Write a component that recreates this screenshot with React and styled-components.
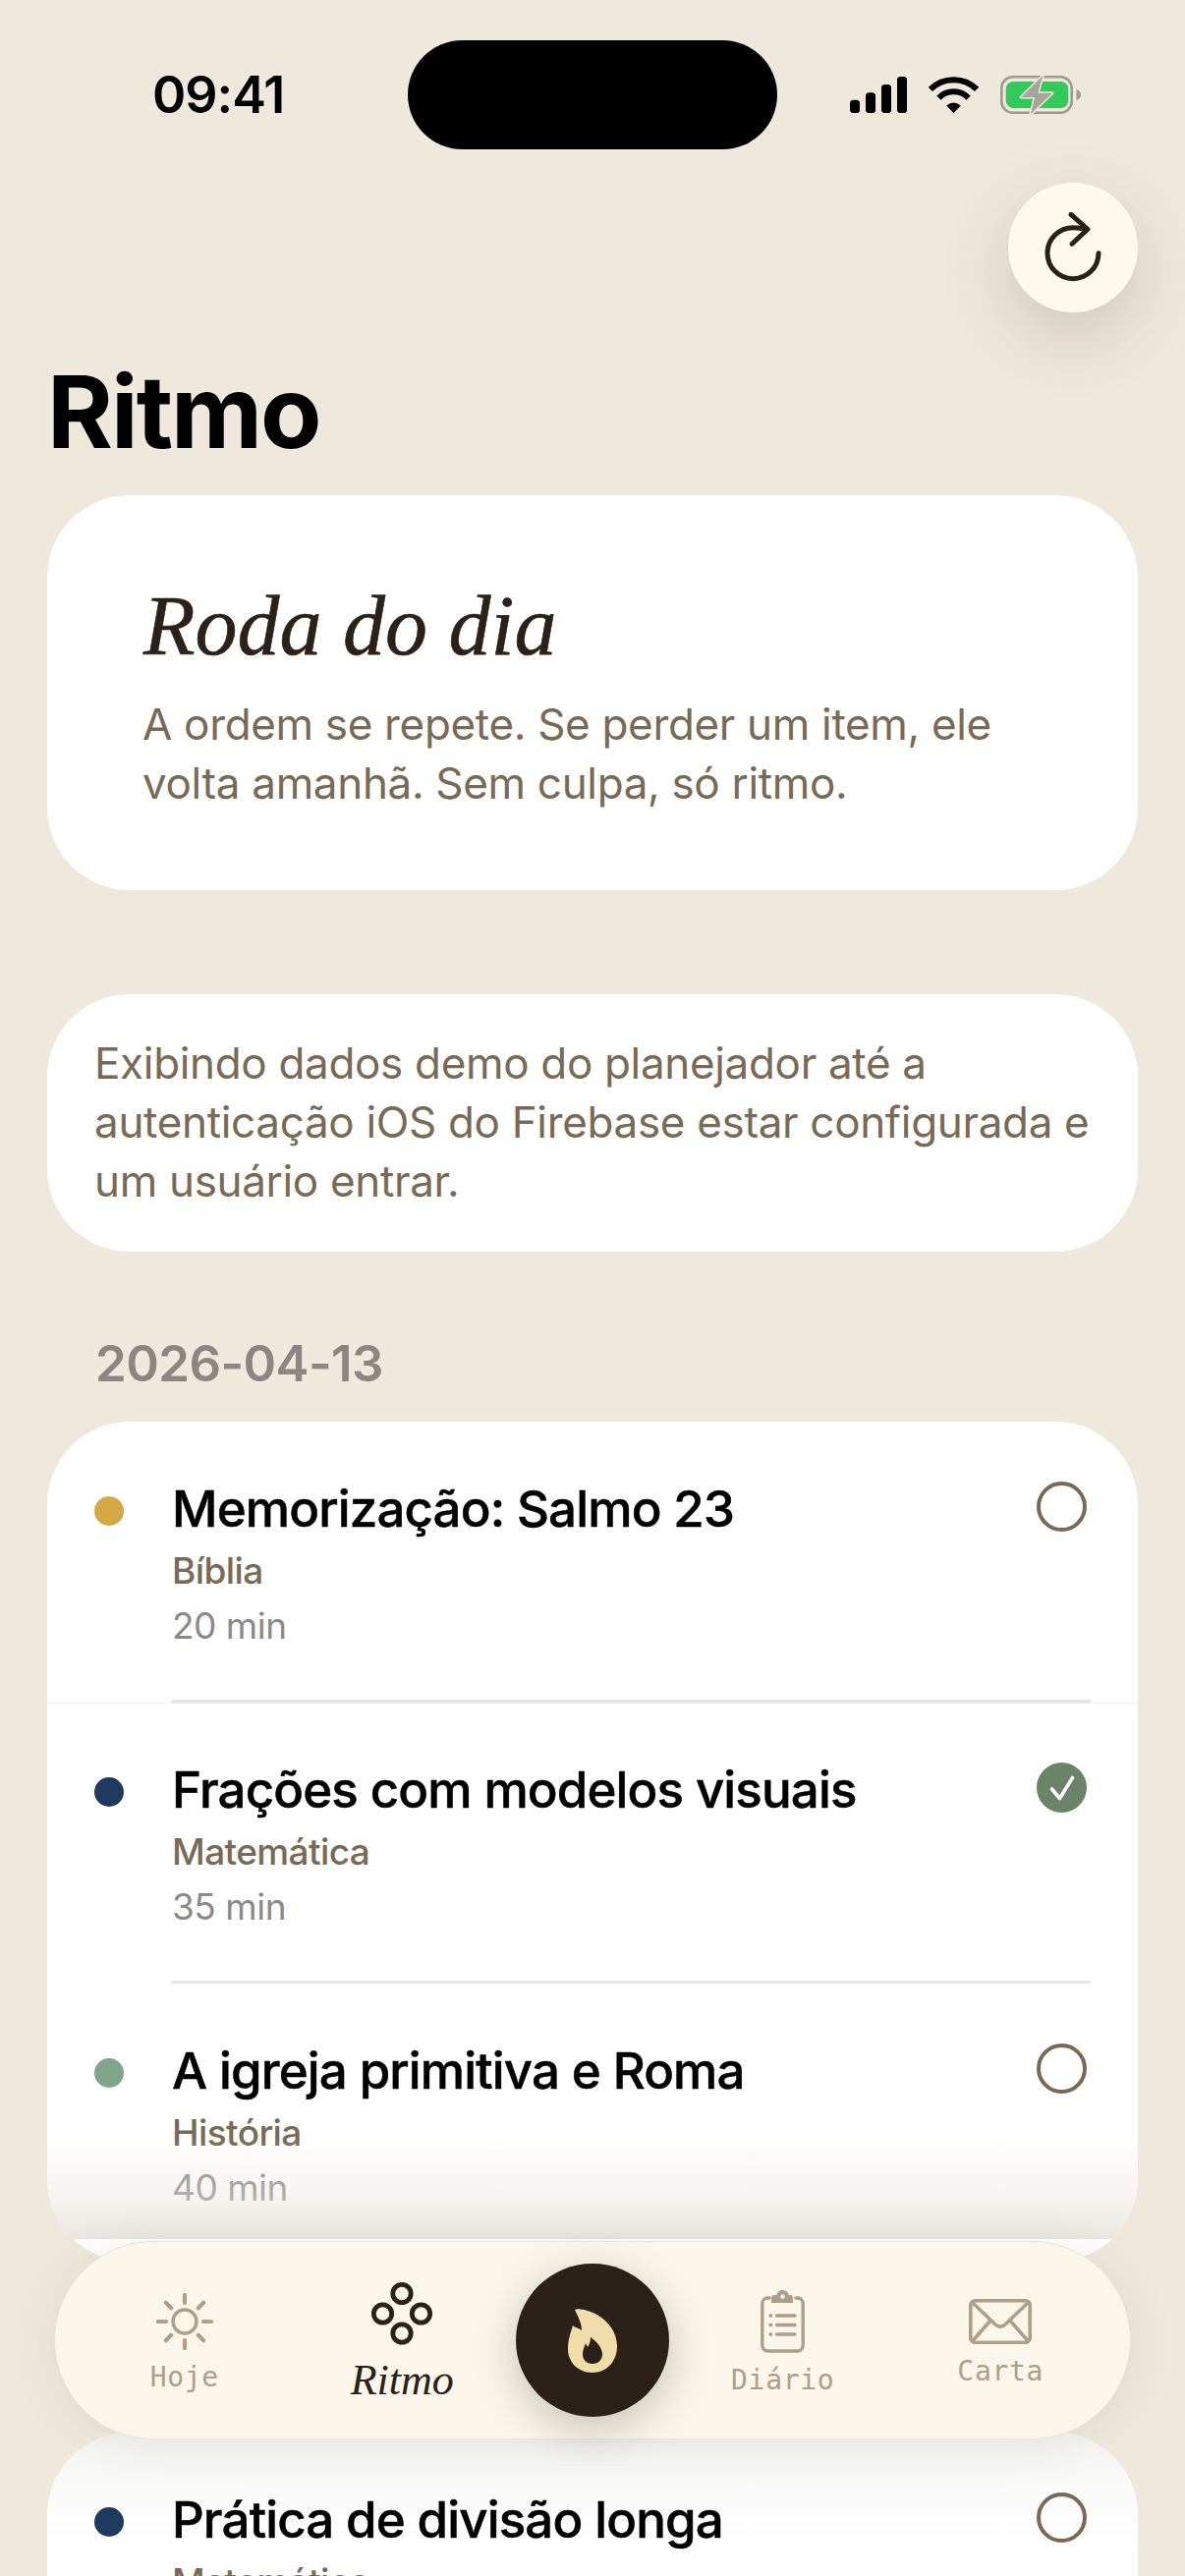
import React from 'react';
import styled, { createGlobalStyle } from 'styled-components';

const GlobalStyle = createGlobalStyle`
    html, body {
        margin: 0;
        padding: 0;
        background: #efe9dd;
    }
    * {
        box-sizing: border-box;
    }
`;

const SANS = `Inter, "Liberation Sans", sans-serif`;
const SERIF = `"Liberation Serif", serif`;
const MONO = `"DejaVu Sans Mono", monospace`;

const Page = styled.div`
    position: relative;
    width: 1206px;
    height: 2622px;
    overflow: hidden;
    background: #efe9dd;
    font-family: ${SANS};
`;

const StatusBar = styled.div`
    display: grid;
    grid-template-columns: 415px 376px 1fr;
    align-items: center;
    padding-top: 41px;
`;

const Time = styled.div`
    padding-left: 155px;
    font-size: 52px;
    line-height: 60px;
    font-weight: 600;
    letter-spacing: -1px;
    color: #000;
`;

const Island = styled.div`
    height: 111px;
    border-radius: 56px;
    background: #000;
`;

const StatusIcons = styled.div`
    display: flex;
    align-items: center;
    padding-left: 74px;
    gap: 22px;
`;

const RefreshRow = styled.div`
    display: flex;
    justify-content: flex-end;
    padding: 34px 48px 0;
`;

const RefreshButton = styled.button`
    display: flex;
    align-items: center;
    justify-content: center;
    width: 132px;
    height: 132px;
    padding: 0;
    border: none;
    border-radius: 50%;
    background: #fff9ec;
    box-shadow: 0 24px 70px rgba(70, 60, 35, 0.2);
`;

const Content = styled.div`
    padding: 0 48px;
`;

const Title = styled.h1`
    margin: 41px 0 25px;
    font-size: 102px;
    line-height: 120px;
    font-weight: 700;
    letter-spacing: -2px;
    color: #000;
`;

const Card = styled.div`
    position: relative;
    overflow: hidden;
    border-radius: 84px;
    background: ${props => props.$shaded ? 'linear-gradient(#f4f4f3, #ffffff 110px)' : '#ffffff'};
`;

const HeroCard = styled(Card)`
    padding: 83px 97px 79px;
    margin-bottom: 106px;
`;

const HeroTitle = styled.h2`
    margin: 0 0 20px 1px;
    font-family: ${SERIF};
    font-style: italic;
    font-weight: 400;
    font-size: 86px;
    line-height: 100px;
    -webkit-text-stroke: 0.6px #2c2118;
    color: #2c2118;
`;

const BodyText = styled.p`
    margin: 0;
    font-size: 44px;
    line-height: 60px;
    letter-spacing: -0.33px;
    color: #7a6a55;
`;

const NoticeCard = styled(Card)`
    padding: 40px 44px 42px 48px;
`;

const DateLabel = styled.div`
    margin: 84px 0 29px;
    padding-left: 49px;
    font-size: 51px;
    line-height: 60px;
    font-weight: 600;
    letter-spacing: -0.6px;
    color: #8b8681;
`;

const ListCard = styled(Card)`
    margin-bottom: 174px;
`;

const Row = styled.div`
    display: flex;
    align-items: flex-start;
    padding: 58px 52px 52px 48px;
`;

const Dot = styled.span`
    flex: none;
    width: 30px;
    height: 30px;
    margin: 18px 49px 0 0;
    border-radius: 50%;
    background: ${props => props.$color};
`;

const RowText = styled.div`
    flex: 1;
    display: flex;
    flex-direction: column;
    gap: 8.5px;
`;

const RowTitle = styled.div`
    font-size: 51px;
    line-height: 62px;
    font-weight: 500;
    letter-spacing: -0.85px;
    -webkit-text-stroke: 0.5px #000;
    color: #000;
`;

const RowSubject = styled.div`
    font-size: 37px;
    line-height: 46px;
    font-weight: 500;
    letter-spacing: -0.6px;
    color: #7a6a55;
`;

const RowTime = styled.div`
    margin-top: 2px;
    font-size: 37px;
    line-height: 46px;
    letter-spacing: -0.5px;
    color: #8a8a88;
`;

const Circle = styled.span`
    flex: none;
    display: flex;
    align-items: center;
    justify-content: center;
    width: 51px;
    height: 51px;
    margin-top: 3px;
    border-radius: 50%;
    border: ${props => props.$done ? 'none' : '4px solid #7a6a55'};
    background: ${props => props.$done ? '#6b8468' : 'transparent'};
`;

const Divider = styled.div`
    height: 3px;
    margin: 0 48px 0 126px;
    background: #e6e6e4;
`;

const CardEdge = styled.div`
    height: 1px;
    margin-bottom: -1px;
    background: #f0f0ee;
`;

const BottomFade = styled.div`
    position: absolute;
    left: 0;
    right: 0;
    bottom: 23px;
    height: 105px;
    background: linear-gradient(
        rgba(232, 229, 220, 0),
        rgba(232, 229, 220, 0.42) 60%,
        rgba(230, 227, 218, 0.85)
    );
`;

const TabBar = styled.nav`
    position: absolute;
    left: 55px;
    right: 55px;
    bottom: 139px;
    height: 202px;
    display: flex;
    align-items: center;
    padding: 0 21px;
    border: 1px solid #e9e4d8;
    border-radius: 101px;
    background: #faf6ea;
    box-shadow: 0 4px 50px rgba(70, 60, 35, 0.09);
`;

const TabItem = styled.div`
    flex: 1;
    display: flex;
    flex-direction: column;
    align-items: center;
    gap: 13px;
    padding-top: 4px;
`;

const TabLabel = styled.span`
    font-family: ${MONO};
    font-size: 28px;
    line-height: 30px;
    letter-spacing: 0.7px;
    color: #ae9f88;
`;

const ActiveLabel = styled.span`
    font-family: ${SERIF};
    font-style: italic;
    font-size: 44px;
    line-height: 46px;
    color: #2c2118;
`;

const FlameButton = styled.div`
    flex: none;
    display: flex;
    align-items: center;
    justify-content: center;
    width: 156px;
    height: 156px;
    margin: 0 5px;
    border-radius: 50%;
    background: #2c2118;
    box-shadow: 0 12px 44px rgba(44, 33, 24, 0.24);
`;

const SignalIcon = () => (
    <svg width="58" height="37" viewBox="0 0 58 37" fill="#000">
        <rect x="0" y="23.7" width="10" height="13.3" rx="3.5" />
        <rect x="16" y="16.3" width="10" height="20.7" rx="3.5" />
        <rect x="32" y="8" width="10" height="29" rx="3.5" />
        <rect x="48" y="0" width="10" height="37" rx="3.5" />
    </svg>
);

const WifiIcon = () => (
    <svg width="51" height="37" viewBox="0 0 51 37" fill="none" stroke="#000" strokeWidth="6">
        <path d="M1.9 12.9A33.6 33.6 0 0 1 49.1 12.9" />
        <path d="M10.4 21.6A21.2 21.2 0 0 1 40.6 21.6" />
        <path d="M25.5 37 L18.2 29.4 Q25.5 23.6 32.8 29.4 Z" fill="#000" stroke="none" />
    </svg>
);

const BatteryIcon = () => (
    <svg width="82" height="39" viewBox="0 0 82 39" fill="none">
        <rect x="1.3" y="1.3" width="71.4" height="36.4" rx="11.5" stroke="#9e9a90" strokeWidth="2.6" />
        <rect x="5.7" y="6" width="63.6" height="27" rx="7.5" fill="#34c85a" />
        <path d="M77.5 14 C80.5 15 82 17 82 19.5 C82 22 80.5 24 77.5 25 Z" fill="#9e9a90" />
        <path
            d="M43.3 0 L21 22 L35 22 L31 39 L53 17.7 L38.3 17.7 Z"
            fill="#a8a499"
            stroke="#efe9dd"
            strokeWidth="3"
            strokeLinejoin="round"
            paintOrder="stroke"
        />
    </svg>
);

const RefreshIcon = () => (
    <svg width="64" height="72" viewBox="-2 0 64 72" fill="none" stroke="#2c2118" strokeWidth="5" strokeLinecap="round" strokeLinejoin="round">
        <path d="M28 2.3 L45 17.3 L29 32.3" />
        <path d="M44 17.6 C40 16.3 34 15.7 30 15.7 A26 26 0 1 0 56 41.7" />
    </svg>
);

const CheckIcon = () => (
    <svg width="51" height="51" viewBox="0 0 51 51" fill="none" stroke="#fff" strokeWidth="3.6" strokeLinecap="round" strokeLinejoin="round">
        <path d="M15.5 27 L23.5 36.5 L36.5 15.5" />
    </svg>
);

const SunIcon = () => (
    <svg width="58" height="58" viewBox="-29 -29 58 58" fill="none" stroke="#ae9f88" strokeLinecap="round">
        <circle r="12" strokeWidth="3.4" />
        <g strokeWidth="4.2">
            <path d="M0 -27V-19M0 27V19M-27 0H-19M27 0H19" />
            <path d="M-19.2 -19.2L-13.8 -13.8M19.2 -19.2L13.8 -13.8M-19.2 19.2L-13.8 13.8M19.2 19.2L13.8 13.8" />
        </g>
    </svg>
);

const RingsIcon = () => (
    <svg width="62" height="64" viewBox="0 0 62 64" fill="none" stroke="#2c2118" strokeWidth="4.8">
        <circle cx="31" cy="11.5" r="9.2" />
        <circle cx="31" cy="52" r="9.2" />
        <circle cx="11.5" cy="32" r="9.2" />
        <circle cx="50.5" cy="32" r="9.2" />
    </svg>
);

const FlameIcon = () => (
    <svg width="50" height="65" viewBox="0 0 50 65">
        <path
            d="M7 1 C8 0 10 0 13 0.5 C32 3 50 18 50 38 C50 54 39 65 25 65 C10 65 0 54 0 41 C0 31 3 24 5 17 C7 19 10 19 14 22 C14 14 10 8 7 1 Z"
            fill="#f0dca8"
        />
        <path
            d="M23 29 C29 33 35 40 35 46 C35 52 31 56 25 56 C19 56 15 52 15 46 C15 42 17 38 18 35 L20 39 C22 36 23 33 23 29 Z"
            fill="#2c2118"
        />
    </svg>
);

const ClipboardIcon = () => (
    <svg width="45" height="64" viewBox="0 0 45 64" fill="none" stroke="#ae9f88" strokeWidth="3.4" strokeLinecap="round">
        <path d="M9 8 H7.5 A5.8 5.8 0 0 0 1.8 13.8 V56.2 A5.8 5.8 0 0 0 7.5 62 H37.5 A5.8 5.8 0 0 0 43.2 56.2 V13.8 A5.8 5.8 0 0 0 37.5 8 H36" />
        <path
            d="M16.5 5 A6 5 0 0 1 28.5 5 H30 A3 3 0 0 1 33 8 V13 H11 V8 A3 3 0 0 1 14 5 Z"
            fill="#ae9f88"
            stroke="none"
        />
        <circle cx="22.5" cy="6.5" r="2.2" fill="#faf6ea" stroke="none" />
        <path d="M16.5 26 H35M16.5 35.5 H35M16.5 45 H35" />
        <g fill="#ae9f88" stroke="none">
            <circle cx="10.3" cy="26" r="2" />
            <circle cx="10.3" cy="35.5" r="2" />
            <circle cx="10.3" cy="45" r="2" />
        </g>
    </svg>
);

const EnvelopeIcon = () => (
    <svg width="64" height="46" viewBox="0 0 64 46" fill="none" stroke="#ae9f88" strokeWidth="3.6" strokeLinejoin="round">
        <rect x="1.8" y="1.8" width="60.4" height="42.4" rx="4.5" />
        <path d="M3 3 L27 26 Q32 30.5 37 26 L61 3" />
        <path d="M3.5 43 L22.5 21.5M60.5 43 L41.5 21.5" />
    </svg>
);

const tasks = [
    { id: 1, color: '#d4a843', title: 'Memorização: Salmo 23', subject: 'Bíblia', time: '20 min' },
    { id: 2, color: '#1e3a5f', title: 'Frações com modelos visuais', subject: 'Matemática', time: '35 min', done: true },
    { id: 3, color: '#7fa58f', title: 'A igreja primitiva e Roma', subject: 'História', time: '40 min' }
];

const TaskRow = ({ task }) => (
    <Row>
        <Dot $color={task.color} />
        <RowText>
            <RowTitle>{task.title}</RowTitle>
            <RowSubject>{task.subject}</RowSubject>
            <RowTime>{task.time}</RowTime>
        </RowText>
        <Circle $done={task.done}>{task.done && <CheckIcon />}</Circle>
    </Row>
);

const App = () => (
    <Page>
        <GlobalStyle />
        <StatusBar>
            <Time>09:41</Time>
            <Island />
            <StatusIcons>
                <SignalIcon />
                <WifiIcon />
                <BatteryIcon />
            </StatusIcons>
        </StatusBar>
        <RefreshRow>
            <RefreshButton aria-label="Atualizar">
                <RefreshIcon />
            </RefreshButton>
        </RefreshRow>
        <Content>
            <Title>Ritmo</Title>
            <HeroCard>
                <HeroTitle>Roda do dia</HeroTitle>
                <BodyText>A ordem se repete. Se perder um item, ele volta amanhã. Sem culpa, só ritmo.</BodyText>
            </HeroCard>
            <NoticeCard>
                <BodyText>Exibindo dados demo do planejador até a autenticação iOS do Firebase estar configurada e um usuário entrar.</BodyText>
            </NoticeCard>
            <DateLabel>2026-04-13</DateLabel>
            <ListCard>
                <TaskRow task={tasks[0]} />
                <Divider />
                <CardEdge />
                <TaskRow task={tasks[1]} />
                <Divider />
                <TaskRow task={tasks[2]} />
                <BottomFade />
            </ListCard>
            <Card $shaded>
                <TaskRow task={{ id: 4, color: '#1e3a5f', title: 'Prática de divisão longa', subject: 'Matemática', time: '30 min' }} />
            </Card>
        </Content>
        <TabBar>
            <TabItem>
                <SunIcon />
                <TabLabel>Hoje</TabLabel>
            </TabItem>
            <TabItem>
                <RingsIcon />
                <ActiveLabel>Ritmo</ActiveLabel>
            </TabItem>
            <FlameButton>
                <FlameIcon />
            </FlameButton>
            <TabItem>
                <ClipboardIcon />
                <TabLabel>Diário</TabLabel>
            </TabItem>
            <TabItem>
                <EnvelopeIcon />
                <TabLabel>Carta</TabLabel>
            </TabItem>
        </TabBar>
    </Page>
);

export default App;
